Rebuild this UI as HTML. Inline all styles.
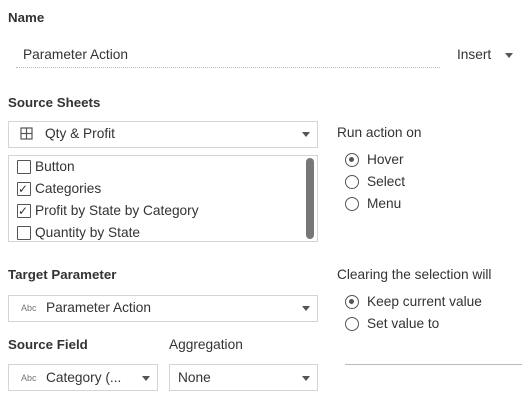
<!DOCTYPE html>
<html><head><style>
body{margin:0;width:522px;height:402px;background:#fff;position:relative;overflow:hidden;font-family:"Liberation Sans",sans-serif;color:#333;font-size:13.7px}
.a{position:absolute;white-space:nowrap;line-height:16px}
.b{font-weight:bold;color:#333;font-size:13.3px}
.box{position:absolute;border:1px solid #d4d4d4;box-sizing:border-box;background:#fff}
.arr{position:absolute;width:0;height:0;border-left:4px solid transparent;border-right:4px solid transparent;border-top:5px solid #555}
.rad{position:absolute;width:14px;height:14px;border:1.3px solid #555;border-radius:50%;box-sizing:border-box}
.rad.on::after{content:"";position:absolute;left:3px;top:3px;width:5.4px;height:5.4px;border-radius:50%;background:#555}
.cb{position:absolute;left:17px;width:14px;height:14px;border:1px solid #555;box-sizing:border-box;border-radius:1px}
.abc{font-size:9px;color:#777}
</style></head><body>
<div class="a b" style="left:8px;top:10px">Name</div>
<div class="a" style="left:23px;top:47px">Parameter Action</div>
<div style="position:absolute;left:16px;top:67px;width:424px;border-top:1px dotted #bbb"></div>
<div class="a" style="left:457px;top:47px">Insert</div>
<div class="arr" style="left:505px;top:53px"></div>
<div class="a b" style="left:8px;top:95px">Source Sheets</div>

<div class="box" style="left:8px;top:121px;width:310px;height:27px"></div>
<svg class="a" style="left:20px;top:127px" width="13" height="13" viewBox="0 0 13 13"><rect x="1" y="1" width="11" height="11" fill="none" stroke="#555" stroke-width="1.2"/><line x1="6.5" y1="1" x2="6.5" y2="12" stroke="#555" stroke-width="1.2"/><line x1="1" y1="6.5" x2="12" y2="6.5" stroke="#555" stroke-width="1.2"/></svg>
<div class="a" style="left:45px;top:126px">Qty &amp; Profit</div>
<div class="arr" style="left:302px;top:132px"></div>

<div class="box" style="left:8px;top:155px;width:310px;height:87px"></div>
<div style="position:absolute;left:306px;top:158px;width:8px;height:81px;border-radius:4px;background:#777"></div>
<div class="cb" style="top:160px"></div><div class="a" style="left:35px;top:159px">Button</div>
<div class="cb" style="top:182px"></div><div class="a" style="left:18px;top:181px;font-size:12px">✓</div><div class="a" style="left:35px;top:181px">Categories</div>
<div class="cb" style="top:204px"></div><div class="a" style="left:18px;top:203px;font-size:12px">✓</div><div class="a" style="left:35px;top:203px">Profit by State by Category</div>
<div class="cb" style="top:226px"></div><div class="a" style="left:35px;top:225px">Quantity by State</div>

<div class="a" style="left:337px;top:125px">Run action on</div>
<div class="rad on" style="left:345px;top:153px"></div><div class="a" style="left:367px;top:152px">Hover</div>
<div class="rad" style="left:345px;top:175px"></div><div class="a" style="left:367px;top:174px">Select</div>
<div class="rad" style="left:345px;top:197px"></div><div class="a" style="left:367px;top:196px">Menu</div>

<div class="a b" style="left:8px;top:267px">Target Parameter</div>
<div class="a" style="left:337px;top:267px">Clearing the selection will</div>
<div class="box" style="left:8px;top:295px;width:310px;height:27px"></div>
<div class="a abc" style="left:21px;top:300px">Abc</div>
<div class="a" style="left:46px;top:300px">Parameter Action</div>
<div class="arr" style="left:302px;top:306px"></div>
<div class="rad on" style="left:345px;top:295px"></div><div class="a" style="left:367px;top:294px">Keep current value</div>
<div class="rad" style="left:345px;top:317px"></div><div class="a" style="left:367px;top:316px">Set value to</div>

<div class="a b" style="left:8px;top:337px">Source Field</div>
<div class="a" style="left:169px;top:337px">Aggregation</div>
<div style="position:absolute;left:345px;top:364px;width:177px;border-top:1px solid #bbb"></div>
<div class="box" style="left:8px;top:364px;width:150px;height:27px"></div>
<div class="a abc" style="left:21px;top:370px">Abc</div>
<div class="a" style="left:46px;top:370px">Category (...</div>
<div class="arr" style="left:142px;top:376px"></div>
<div class="box" style="left:169px;top:364px;width:149px;height:27px"></div>
<div class="a" style="left:178px;top:370px">None</div>
<div class="arr" style="left:302px;top:376px"></div>
</body></html>
